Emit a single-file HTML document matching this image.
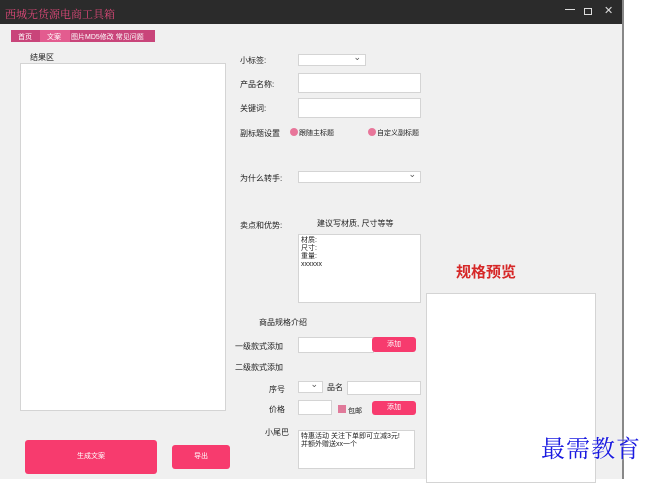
<!DOCTYPE html>
<html><head><meta charset="utf-8"><style>
body{margin:0;width:662px;height:479px;background:#fff;position:relative;overflow:hidden;font-family:"Liberation Sans","Noto Sans CJK SC",sans-serif;font-size:8px;color:#222}
.a{position:absolute}
.win{left:0;top:0;width:622px;height:479px;background:#f0f0f0;border-right:2px solid #888}
.tb{left:0;top:0;width:622px;height:24px;background:#2b2b2b}
.box{background:#fff;border:1px solid #d4d4d4;box-sizing:border-box}
.btn{background:#f73b6e;color:#fff;border-radius:3px;text-align:center}
.dot{width:8px;height:8px;border-radius:50%;background:#e8769a}
.sel::after{content:"⌄";position:absolute;right:4px;top:-3px;font-size:9px;color:#555}
</style></head><body>
<div class="a win"></div>
<div class="a tb"></div>
<div class="a" style="left:5px;top:6px;color:#e0497a;font-family:'Noto Serif CJK SC',serif;font-size:11px">西城无货源电商工具箱</div>
<div class="a" style="left:565px;top:4px;color:#ddd;font-size:10px;font-weight:bold">—</div>
<div class="a" style="left:584px;top:8px;width:6px;height:5px;border:1.5px solid #ddd"></div>
<div class="a" style="left:604px;top:4px;color:#ddd;font-size:11px">✕</div>
<div class="a" style="left:11px;top:30px;width:144px;height:12px;background:#c9457a"></div>
<div class="a" style="left:40px;top:30px;width:30px;height:12px;background:#e35c8f"></div>
<div class="a" style="left:18px;top:32px;color:#fff;font-size:7px">首页</div>
<div class="a" style="left:47px;top:32px;color:#fff;font-size:7px">文案</div>
<div class="a" style="left:71px;top:32px;color:#fff;font-size:7px">图片MD5修改 常见问题</div>
<div class="a" style="left:30px;top:52px">结果区</div>
<div class="a box" style="left:20px;top:63px;width:206px;height:348px"></div>
<div class="a btn" style="left:25px;top:440px;width:132px;height:34px;line-height:34px;font-size:7px">生成文案</div>
<div class="a btn" style="left:172px;top:445px;width:58px;height:24px;line-height:24px;font-size:7px">导出</div>
<div class="a" style="left:240px;top:55px">小标签:</div>
<div class="a box sel" style="left:298px;top:54px;width:68px;height:12px"></div>
<div class="a" style="left:240px;top:79px">产品名称:</div>
<div class="a box" style="left:298px;top:73px;width:123px;height:20px"></div>
<div class="a" style="left:240px;top:103px">关键词:</div>
<div class="a box" style="left:298px;top:98px;width:123px;height:20px"></div>
<div class="a" style="left:240px;top:128px">副标题设置</div>
<div class="a dot" style="left:290px;top:128px"></div>
<div class="a" style="left:299px;top:128px;font-size:7px">跟随主标题</div>
<div class="a dot" style="left:368px;top:128px"></div>
<div class="a" style="left:377px;top:128px;font-size:7px">自定义副标题</div>
<div class="a" style="left:240px;top:173px">为什么转手:</div>
<div class="a box sel" style="left:298px;top:171px;width:123px;height:12px"></div>
<div class="a" style="left:240px;top:220px">卖点和优势:</div>
<div class="a" style="left:317px;top:218px">建议写材质, 尺寸等等</div>
<div class="a box" style="left:298px;top:234px;width:123px;height:69px;font-size:7px;line-height:8px;padding:2px">材质:<br>尺寸:<br>重量:<br>xxxxxx</div>
<div class="a" style="left:259px;top:317px">商品规格介绍</div>
<div class="a" style="left:235px;top:341px">一级款式添加</div>
<div class="a box" style="left:298px;top:337px;width:76px;height:16px"></div>
<div class="a btn" style="left:372px;top:337px;width:44px;height:15px;line-height:15px;font-size:7px">添加</div>
<div class="a" style="left:235px;top:362px">二级款式添加</div>
<div class="a" style="left:269px;top:384px">序号</div>
<div class="a box sel" style="left:298px;top:381px;width:25px;height:12px"></div>
<div class="a" style="left:327px;top:382px">品名</div>
<div class="a box" style="left:347px;top:381px;width:74px;height:14px"></div>
<div class="a" style="left:269px;top:404px">价格</div>
<div class="a box" style="left:298px;top:400px;width:34px;height:15px"></div>
<div class="a" style="left:338px;top:405px;width:8px;height:8px;background:#e07a9a"></div>
<div class="a" style="left:348px;top:406px;font-size:7px">包邮</div>
<div class="a btn" style="left:372px;top:401px;width:44px;height:14px;line-height:14px;font-size:7px">添加</div>
<div class="a" style="left:265px;top:427px">小尾巴</div>
<div class="a box" style="left:298px;top:430px;width:117px;height:39px;font-size:7px;line-height:8px;padding:2px">特惠活动 关注下单即可立减3元!<br>并额外赠送xx一个</div>
<div class="a" style="left:456px;top:261px;color:#d62828;font-size:15px;font-weight:bold">规格预览</div>
<div class="a box" style="left:426px;top:293px;width:170px;height:190px"></div>
<div class="a" style="left:541px;top:429px;color:#1a1ae0;font-family:'Noto Serif CJK SC',serif;font-size:24px;letter-spacing:1px;text-shadow:0 0 2px #fff">最需教育</div>
</body></html>
